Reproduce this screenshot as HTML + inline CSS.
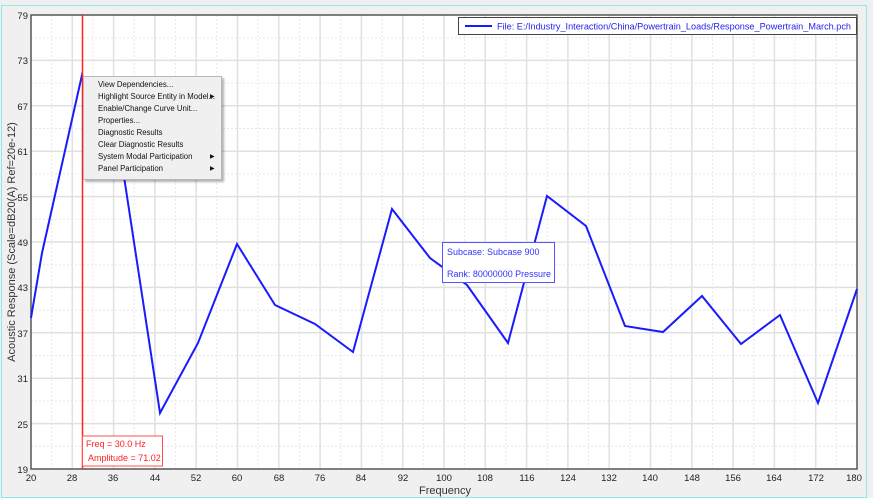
<!DOCTYPE html>
<html><head><style>
body{margin:0;width:873px;height:498px;background:#f0f0f0;overflow:hidden;font-family:"Liberation Sans",Arial,sans-serif;}
svg{position:absolute;left:0;top:0}
.menu{position:absolute;left:83px;top:76px;width:137px;height:102px;background:#f0f0f0;border:1px solid #b8b8b8;box-shadow:2px 2px 2px rgba(0,0,0,.3);font-size:7.8px;color:#111}
.menu div{position:absolute;left:14px;white-space:nowrap}
.menu span{position:absolute;left:126px;font-size:6px}
</style></head><body>
<svg width="873" height="498" viewBox="0 0 873 498">
<rect x="1.5" y="5.5" width="865" height="492" fill="#f0f0f0" stroke="#8ee8ee"/>
<rect x="31" y="15" width="826" height="454" fill="#fff"/>
<g stroke="#e8e8e8" stroke-dasharray="2,2" stroke-width="1">
<line x1="51.6" y1="15" x2="51.6" y2="469"/><line x1="92.9" y1="15" x2="92.9" y2="469"/><line x1="134.2" y1="15" x2="134.2" y2="469"/><line x1="175.5" y1="15" x2="175.5" y2="469"/><line x1="216.8" y1="15" x2="216.8" y2="469"/><line x1="258.1" y1="15" x2="258.1" y2="469"/><line x1="299.4" y1="15" x2="299.4" y2="469"/><line x1="340.7" y1="15" x2="340.7" y2="469"/><line x1="382" y1="15" x2="382" y2="469"/><line x1="423.3" y1="15" x2="423.3" y2="469"/><line x1="464.6" y1="15" x2="464.6" y2="469"/><line x1="505.9" y1="15" x2="505.9" y2="469"/><line x1="547.2" y1="15" x2="547.2" y2="469"/><line x1="588.5" y1="15" x2="588.5" y2="469"/><line x1="629.8" y1="15" x2="629.8" y2="469"/><line x1="671.1" y1="15" x2="671.1" y2="469"/><line x1="712.4" y1="15" x2="712.4" y2="469"/><line x1="753.7" y1="15" x2="753.7" y2="469"/><line x1="795" y1="15" x2="795" y2="469"/><line x1="836.3" y1="15" x2="836.3" y2="469"/>
<line x1="31" y1="37.7" x2="857" y2="37.7"/><line x1="31" y1="83.1" x2="857" y2="83.1"/><line x1="31" y1="128.5" x2="857" y2="128.5"/><line x1="31" y1="173.9" x2="857" y2="173.9"/><line x1="31" y1="219.3" x2="857" y2="219.3"/><line x1="31" y1="264.7" x2="857" y2="264.7"/><line x1="31" y1="310.1" x2="857" y2="310.1"/><line x1="31" y1="355.5" x2="857" y2="355.5"/><line x1="31" y1="400.9" x2="857" y2="400.9"/><line x1="31" y1="446.3" x2="857" y2="446.3"/>
</g>
<g stroke="#e0e0e0" stroke-width="1.5">
<line x1="72.3" y1="15" x2="72.3" y2="469"/><line x1="113.6" y1="15" x2="113.6" y2="469"/><line x1="154.9" y1="15" x2="154.9" y2="469"/><line x1="196.2" y1="15" x2="196.2" y2="469"/><line x1="237.5" y1="15" x2="237.5" y2="469"/><line x1="278.8" y1="15" x2="278.8" y2="469"/><line x1="320.1" y1="15" x2="320.1" y2="469"/><line x1="361.4" y1="15" x2="361.4" y2="469"/><line x1="402.7" y1="15" x2="402.7" y2="469"/><line x1="444" y1="15" x2="444" y2="469"/><line x1="485.3" y1="15" x2="485.3" y2="469"/><line x1="526.6" y1="15" x2="526.6" y2="469"/><line x1="567.9" y1="15" x2="567.9" y2="469"/><line x1="609.2" y1="15" x2="609.2" y2="469"/><line x1="650.5" y1="15" x2="650.5" y2="469"/><line x1="691.8" y1="15" x2="691.8" y2="469"/><line x1="733.1" y1="15" x2="733.1" y2="469"/><line x1="774.4" y1="15" x2="774.4" y2="469"/><line x1="815.7" y1="15" x2="815.7" y2="469"/>
<line x1="31" y1="60.4" x2="857" y2="60.4"/><line x1="31" y1="105.8" x2="857" y2="105.8"/><line x1="31" y1="151.2" x2="857" y2="151.2"/><line x1="31" y1="196.6" x2="857" y2="196.6"/><line x1="31" y1="242" x2="857" y2="242"/><line x1="31" y1="287.4" x2="857" y2="287.4"/><line x1="31" y1="332.8" x2="857" y2="332.8"/><line x1="31" y1="378.2" x2="857" y2="378.2"/><line x1="31" y1="423.6" x2="857" y2="423.6"/>
</g>
<rect x="31" y="15" width="826" height="454" fill="none" stroke="#555" stroke-width="1.5"/>
<polyline fill="none" stroke="#1a1aff" stroke-width="2" points="31,318 42,253 82,75 123,170 160,413 198,343 237,244 275,305 315,324 353,352 392,209 430,258 467,285 508,343 547,196 586,226 625,326 663,332 702,296 741,344 780,315 818,403 857,289"/>
<line x1="82.5" y1="15" x2="82.5" y2="469" stroke="#ff2020" stroke-width="1.5"/>
<rect x="82.5" y="436" width="80" height="30" fill="#fff" stroke="#ff5050"/>
<text x="86" y="447" font-size="9" fill="#ff2020">Freq = 30.0 Hz</text>
<text x="88" y="461" font-size="9" fill="#ff2020">Amplitude = 71.02</text>
<rect x="458.5" y="17.5" width="398" height="17" fill="#fff" stroke="#444"/>
<line x1="465" y1="26" x2="492" y2="26" stroke="#1a1aff" stroke-width="2"/>
<text x="497" y="29.5" font-size="9.5" fill="#2222ee" textLength="354" lengthAdjust="spacingAndGlyphs">File: E:/Industry_Interaction/China/Powertrain_Loads/Response_Powertrain_March.pch</text>
<rect x="442.5" y="242.5" width="112" height="40" fill="#fff" stroke="#5555ff"/>
<text x="447" y="255" font-size="9" fill="#3333ff">Subcase: Subcase 900</text>
<text x="447" y="277" font-size="9" fill="#3333ff" textLength="104" lengthAdjust="spacingAndGlyphs">Rank: 80000000  Pressure</text>
<g font-size="9.5" fill="#222" text-anchor="end">
<text x="28" y="19">79</text><text x="28" y="64">73</text><text x="28" y="110">67</text><text x="28" y="155">61</text><text x="28" y="201">55</text><text x="28" y="246">49</text><text x="28" y="291">43</text><text x="28" y="337">37</text><text x="28" y="382">31</text><text x="28" y="428">25</text><text x="28" y="473">19</text>
</g>
<g font-size="9.5" fill="#222" text-anchor="middle">
<text x="31" y="481">20</text><text x="72" y="481">28</text><text x="113" y="481">36</text><text x="155" y="481">44</text><text x="196" y="481">52</text><text x="237" y="481">60</text><text x="279" y="481">68</text><text x="320" y="481">76</text><text x="361" y="481">84</text><text x="403" y="481">92</text><text x="444" y="481">100</text><text x="485" y="481">108</text><text x="527" y="481">116</text><text x="568" y="481">124</text><text x="609" y="481">132</text><text x="650" y="481">140</text><text x="692" y="481">148</text><text x="733" y="481">156</text><text x="774" y="481">164</text><text x="816" y="481">172</text><text x="854" y="481">180</text>
</g>
<text x="445" y="494" font-size="11" fill="#333" text-anchor="middle">Frequency</text>
<text transform="translate(15,242) rotate(-90)" font-size="11" fill="#333" text-anchor="middle">Acoustic Response (Scale=dB20(A) Ref=20e-12)</text>
</svg>
<div class="menu">
<div style="top:3px">View Dependencies...</div>
<div style="top:15px">Highlight Source Entity in Model...</div><span style="top:16px">▶</span>
<div style="top:27px">Enable/Change Curve Unit...</div>
<div style="top:39px">Properties...</div>
<div style="top:51px">Diagnostic Results</div>
<div style="top:63px">Clear Diagnostic Results</div>
<div style="top:75px">System Modal Participation</div><span style="top:76px">▶</span>
<div style="top:87px">Panel Participation</div><span style="top:88px">▶</span>
</div>
</body></html>
